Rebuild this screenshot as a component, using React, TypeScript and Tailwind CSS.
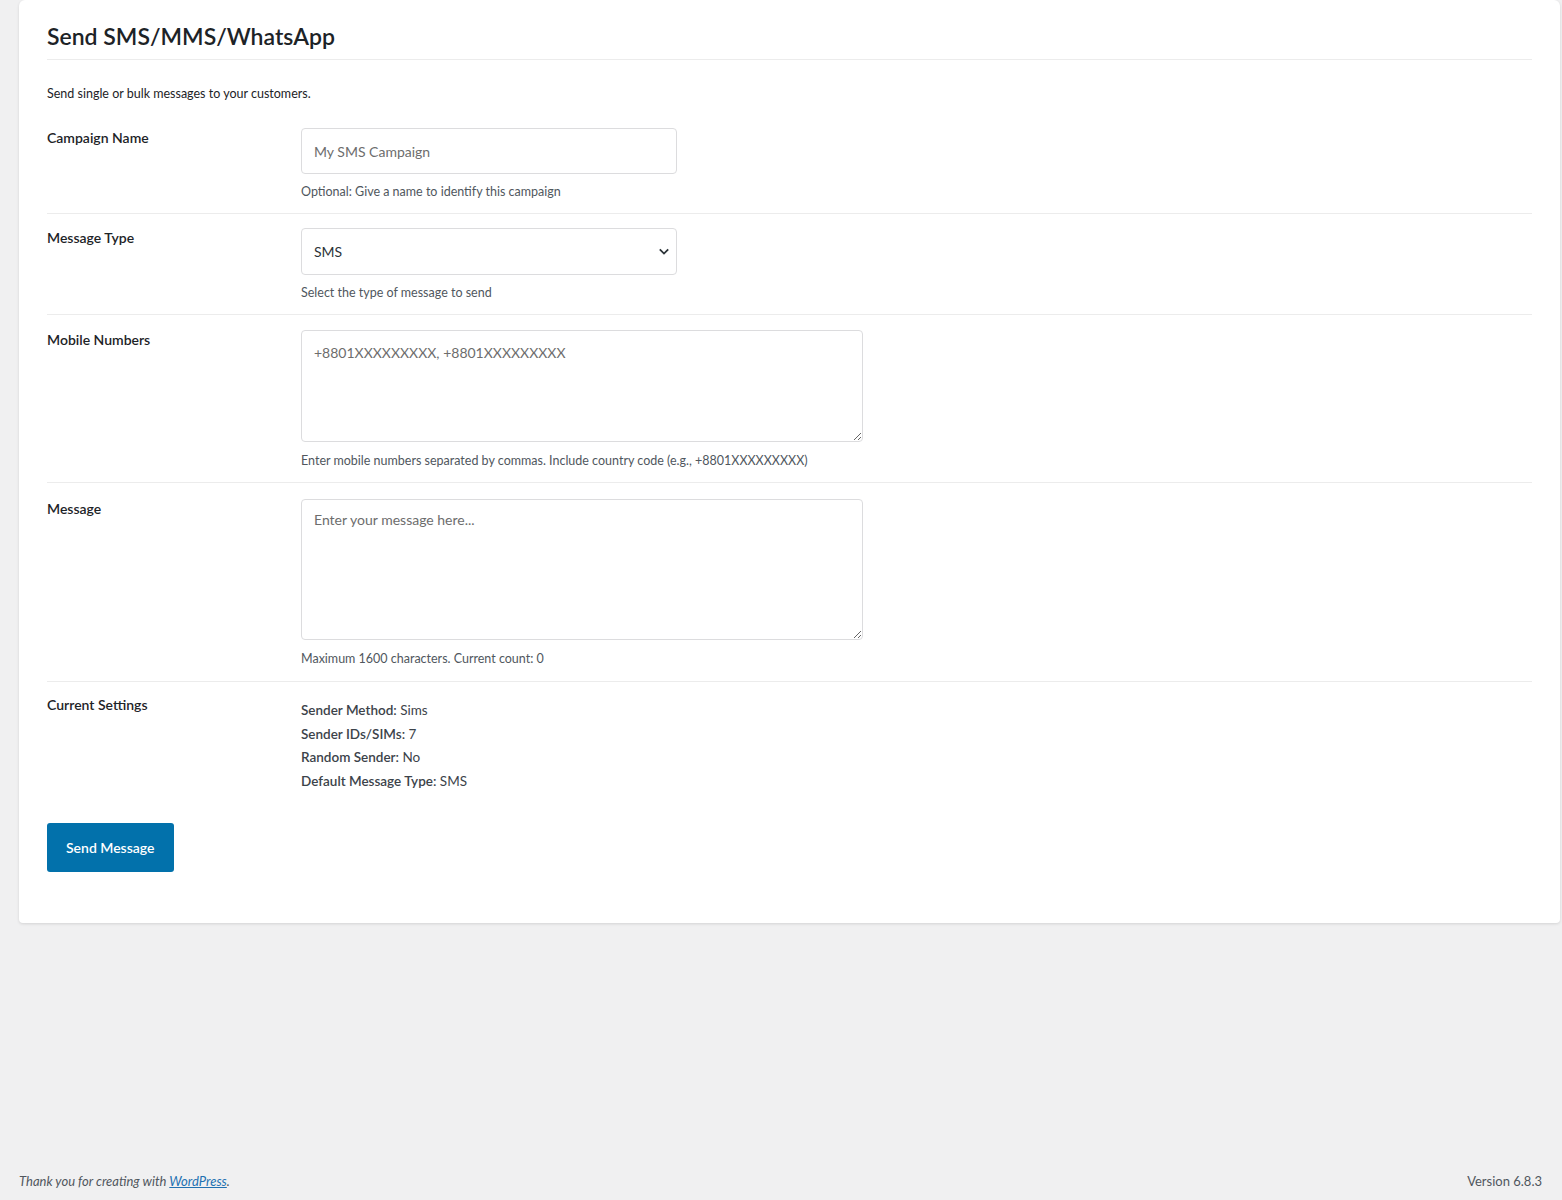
import { useState } from "react";

const font = { fontFamily: "Lato, 'Noto Sans', sans-serif" };

function Row({
  label,
  children,
  className = "",
}: {
  label: string;
  children: React.ReactNode;
  className?: string;
}) {
  return (
    <div className={`flex border-b border-[#ececec] ${className}`}>
      <div className="w-[254px] shrink-0 text-[14px] leading-[20px] font-semibold text-[#1d2327]">
        {label}
      </div>
      <div className="flex-1">{children}</div>
    </div>
  );
}

export default function App() {
  const [name, setName] = useState("");
  const [type, setType] = useState("SMS");
  const [numbers, setNumbers] = useState("");
  const [message, setMessage] = useState("");

  return (
    <div className="h-[1200px] bg-[#f0f0f1] flex flex-col" style={font}>
      <div className="ml-[19px] mr-[2px] bg-white rounded-b-[4px] rounded-t-[6px] shadow-[0_1px_3px_rgba(0,0,0,0.12)] px-[28px] pt-[20px] pb-[51px]">
        <h1 className="text-[23px] leading-[32px] font-semibold text-[#1d2327] pb-[7px] border-b border-[#ececec]">
          Send SMS/MMS/WhatsApp
        </h1>
        <p className="mt-[25px] text-[12.5px] leading-[18px] text-[#1d2327]">
          Send single or bulk messages to your customers.
        </p>

        <div className="mt-[10px]">
          <Row label="Campaign Name" className="pt-[15px] pb-[12px]">
            <input
              value={name}
              onChange={(e) => setName(e.target.value)}
              placeholder="My SMS Campaign"
              className="block w-[376px] h-[46px] px-[12px] text-[14px] text-[#2c3338] placeholder:text-[#6d6d6d] border border-[#dcdcde] rounded-[4px] outline-none"
            />
            <p className="mt-[9px] text-[12.5px] leading-[18px] text-[#50575e]">
              Optional: Give a name to identify this campaign
            </p>
          </Row>

          <Row label="Message Type" className="pt-[14px] pb-[12px]">
            <div className="relative w-[376px]">
              <select
                value={type}
                onChange={(e) => setType(e.target.value)}
                className="block appearance-none w-full h-[47px] px-[12px] text-[14px] text-[#2c3338] bg-white border border-[#dcdcde] rounded-[4px] outline-none"
              >
                <option>SMS</option>
                <option>MMS</option>
                <option>WhatsApp</option>
              </select>
              <svg
                className="absolute right-[7px] top-[19px] pointer-events-none"
                width="12"
                height="9"
                viewBox="0 0 12 9"
                fill="none"
              >
                <path d="M1.8 2.4 6 6.6 10.2 2.4" stroke="#2c3338" strokeWidth="1.8" />
              </svg>
            </div>
            <p className="mt-[9px] text-[12.5px] leading-[18px] text-[#50575e]">
              Select the type of message to send
            </p>
          </Row>

          <Row label="Mobile Numbers" className="pt-[15px] pb-[12px]">
            <textarea
              value={numbers}
              onChange={(e) => setNumbers(e.target.value)}
              placeholder="+8801XXXXXXXXX, +8801XXXXXXXXX"
              className="block w-[562px] h-[112px] px-[12px] py-[12px] text-[14px] leading-[20px] text-[#2c3338] placeholder:text-[#6d6d6d] border border-[#dcdcde] rounded-[4px] outline-none"
            />
            <p className="mt-[10px] text-[12.5px] leading-[18px] text-[#50575e]">
              Enter mobile numbers separated by commas. Include country code
              (e.g., +8801XXXXXXXXX)
            </p>
          </Row>

          <Row label="Message" className="pt-[16px] pb-[13px]">
            <textarea
              value={message}
              onChange={(e) => setMessage(e.target.value)}
              placeholder="Enter your message here..."
              className="block w-[562px] h-[141px] px-[12px] py-[10px] text-[14px] leading-[20px] text-[#2c3338] placeholder:text-[#6d6d6d] border border-[#dcdcde] rounded-[4px] outline-none"
            />
            <p className="mt-[10px] text-[12.5px] leading-[18px] text-[#50575e]">
              Maximum 1600 characters. Current count: {message.length}
            </p>
          </Row>

          <div className="flex pt-[13px]">
            <div className="w-[254px] shrink-0 text-[14px] leading-[20px] font-semibold text-[#1d2327]">
              Current Settings
            </div>
            <div className="pt-[4px] text-[13.5px] leading-[23.6px] text-[#3c434a]">
              <div>
                <span className="font-semibold">Sender Method:</span> Sims
              </div>
              <div>
                <span className="font-semibold">Sender IDs/SIMs:</span> 7
              </div>
              <div>
                <span className="font-semibold">Random Sender:</span> No
              </div>
              <div>
                <span className="font-semibold">Default Message Type:</span> SMS
              </div>
            </div>
          </div>
        </div>

        <button className="mt-[30px] h-[49px] px-[19px] bg-[#0271ab] text-white text-[14px] font-semibold rounded-[3px]">
          Send Message
        </button>
      </div>

      <div className="mt-auto flex justify-between items-center px-[19px] pb-[10px] text-[13px] leading-[18px] text-[#50575e]">
        <span className="italic">
          Thank you for creating with{" "}
          <a href="#" className="text-[#2271b1] underline">
            WordPress
          </a>
          .
        </span>
        <span className="pr-[1px]">Version 6.8.3</span>
      </div>
    </div>
  );
}
